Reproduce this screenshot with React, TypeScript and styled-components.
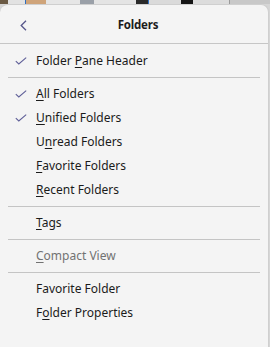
import styled, { createGlobalStyle } from 'styled-components';

const GlobalStyle = createGlobalStyle`
  html, body {
    margin: 0;
    padding: 0;
    background: #d6d6d6;
    font-family: "Noto Sans", "Liberation Sans", sans-serif;
    -webkit-font-smoothing: antialiased;
  }
`;

const Backdrop = styled.div`
  display: flex;
  height: 4px;
  background: #e4e4e4;
`;

interface SegProps {
  w: number;
  color: string;
}

const Seg = styled.div<SegProps>`
  width: ${(p) => p.w}px;
  background: ${(p) => p.color};
`;

const Panel = styled.div`
  width: 269px;
  height: 343px;
  background: #f4f4f4;
  border: 1px solid #cfcfcf;
  border-bottom: none;
  border-left: none;
  border-radius: 8px 8px 0 0;
  box-sizing: border-box;
  display: flex;
  flex-direction: column;
`;

const Header = styled.div`
  height: 39px;
  box-sizing: border-box;
  border-bottom: 1px solid #c6c6c6;
  display: grid;
  grid-template-columns: 36px 1fr 28px;
  align-items: center;
`;

const BackButton = styled.div`
  display: flex;
  justify-content: flex-end;
  padding-right: 9px;
  padding-top: 2px;
`;

const Title = styled.div`
  text-align: center;
  font-weight: 700;
  font-size: 11.5px;
  letter-spacing: -0.2px;
  color: #1c1c1c;
`;

const Menu = styled.div`
  padding-top: 5px;
  display: flex;
  flex-direction: column;
`;

interface ItemProps {
  disabled?: boolean;
}

const Item = styled.div<ItemProps>`
  height: 24px;
  display: grid;
  grid-template-columns: 36px 1fr;
  align-items: center;
  font-size: 12px;
  line-height: 16px;
  color: ${(p) => (p.disabled ? '#727272' : '#1b1b1b')};

  u {
    text-underline-offset: 2px;
    text-decoration-thickness: 1px;
  }
`;

const CheckSlot = styled.div`
  display: flex;
  justify-content: flex-end;
  padding-right: 9px;
`;

const Separator = styled.div`
  height: 1px;
  margin: 4px 8px 4px 8px;
  background: #c4c4c4;
`;

const Check = () => (
  <svg width='12' height='8' viewBox='0 0 12 8'>
    <path d='M0.8 4.2 L3.8 7 L11.2 0.6' fill='none' stroke='#5f5f98' strokeWidth='1.1' />
  </svg>
);

const Chevron = () => (
  <svg width='7' height='11' viewBox='0 0 7 11'>
    <path d='M6 0.8 L1.2 5.5 L6 10.2' fill='none' stroke='#55558a' strokeWidth='1.3' />
  </svg>
);

interface Entry {
  pre?: string;
  accel?: string;
  post?: string;
  checked?: boolean;
  disabled?: boolean;
}

const MenuItem = ({ pre, accel, post, checked, disabled }: Entry) => (
  <Item disabled={disabled}>
    <CheckSlot>{checked ? <Check /> : null}</CheckSlot>
    <div>
      {pre}
      {accel ? <u>{accel}</u> : null}
      {post}
    </div>
  </Item>
);

const App = () => (
  <>
    <GlobalStyle />
    <Backdrop>
      <Seg w={8} color='#6b5a44' />
      <Seg w={17} color='#e2e2e2' />
      <Seg w={1} color='#2f6fc0' />
      <Seg w={20} color='#cfa47a' />
      <Seg w={34} color='#e6e6e6' />
      <Seg w={14} color='#9aa0a8' />
      <Seg w={42} color='#e4e4e4' />
      <Seg w={12} color='#2a2a2a' />
      <Seg w={1} color='#2f6fc0' />
      <Seg w={32} color='#dadada' />
      <Seg w={12} color='#151515' />
      <Seg w={36} color='#dcdcdc' />
      <Seg w={1} color='#9a9a9a' />
      <Seg w={40} color='#c8c8c8' />
    </Backdrop>
    <Panel>
      <Header>
        <BackButton><Chevron /></BackButton>
        <Title>Folders</Title>
        <div />
      </Header>
      <Menu>
        <MenuItem checked pre='Folder ' accel='P' post='ane Header' />
        <Separator />
        <MenuItem checked accel='A' post='ll Folders' />
        <MenuItem checked accel='U' post='nified Folders' />
        <MenuItem pre='U' accel='n' post='read Folders' />
        <MenuItem accel='F' post='avorite Folders' />
        <MenuItem accel='R' post='ecent Folders' />
        <Separator />
        <MenuItem accel='T' post='ags' />
        <Separator />
        <MenuItem disabled accel='C' post='ompact View' />
        <Separator />
        <MenuItem pre='Favorite Folder' />
        <MenuItem pre='F' accel='o' post='lder Properties' />
      </Menu>
    </Panel>
  </>
);

export default App;
